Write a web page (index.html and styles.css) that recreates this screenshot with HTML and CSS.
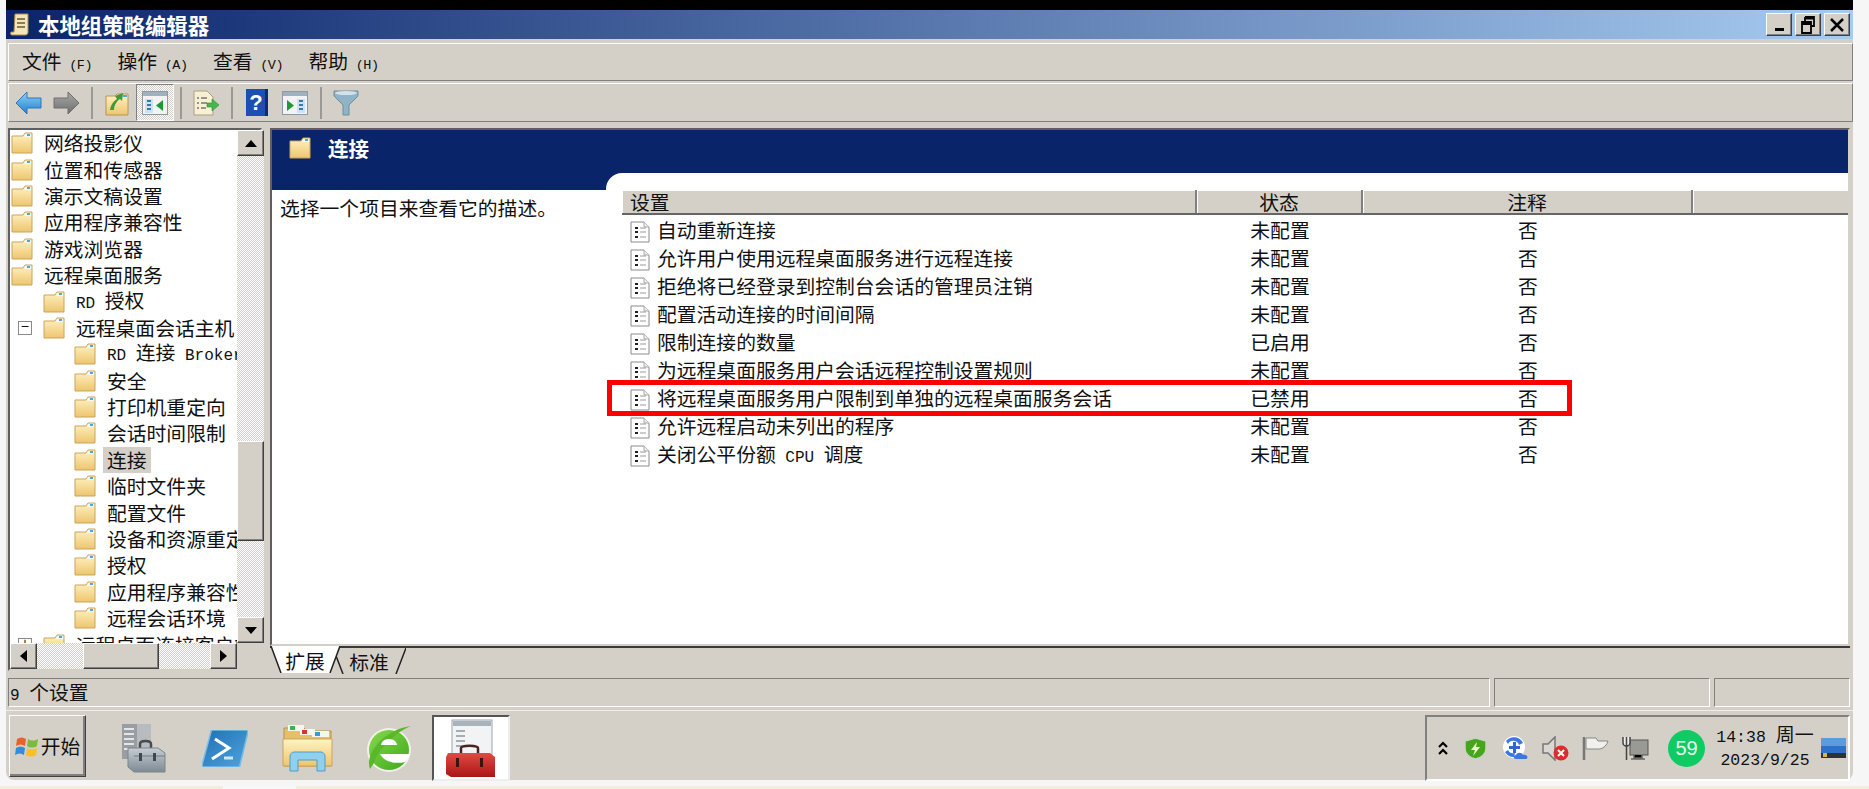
FILE: index.html
```html
<!DOCTYPE html>
<html lang="zh-CN">
<head>
  <meta charset="UTF-8" />
  <title>本地组策略编辑器</title>
  <link rel="stylesheet" href="styles.css">
</head>
<body>
  <!-- shared icons -->
  <svg class="defs" aria-hidden="true">
    <defs>
      <linearGradient id="gFolder" x1="0" y1="0" x2="0" y2="1"><stop offset="0" stop-color="#fff3c4"/><stop offset="1" stop-color="#eec56f"/></linearGradient>
      <linearGradient id="gBlue" x1="0" y1="0" x2="0" y2="1"><stop offset="0" stop-color="#8fd0f5"/><stop offset="1" stop-color="#1f7fd0"/></linearGradient>
      <linearGradient id="gGray" x1="0" y1="0" x2="0" y2="1"><stop offset="0" stop-color="#a8a8a8"/><stop offset="1" stop-color="#6e6e6e"/></linearGradient>
      <linearGradient id="gPs" x1="0" y1="0" x2="1" y2="1"><stop offset="0" stop-color="#1f6fb5"/><stop offset="1" stop-color="#4fa5dc"/></linearGradient>
      <linearGradient id="gRed" x1="0" y1="0" x2="0" y2="1"><stop offset="0" stop-color="#e24a44"/><stop offset="1" stop-color="#a91616"/></linearGradient>
      <linearGradient id="gSteel" x1="0" y1="0" x2="0" y2="1"><stop offset="0" stop-color="#c6cdd3"/><stop offset="1" stop-color="#7f8a93"/></linearGradient>
      <linearGradient id="gIe" x1="0" y1="0" x2="1" y2="1"><stop offset="0" stop-color="#86d94a"/><stop offset="1" stop-color="#3fa81e"/></linearGradient>
      <symbol id="folder" viewBox="0 0 22 22">
        <path d="M1 4h11l2-3h7v20H1z" fill="url(#gFolder)" stroke="#c9a55c" stroke-width="1"/>
        <path d="M14 2h6v3h-7z" fill="#f7f7f0"/>
        <rect x="16" y="2" width="3" height="2" fill="#4ea6e0"/>
      </symbol>
      <symbol id="doc" viewBox="0 0 20 22">
        <path d="M1 1h13l5 5v15H1z" fill="#fff" stroke="#8a8a8a"/>
        <path d="M14 1v5h5" fill="#eee" stroke="#aaa"/>
        <path d="M5 6h3v2H5zM5 10h3v2H5zM5 15h3v2H5z" fill="#222"/>
        <path d="M10 7h6M10 11h6M10 16h6" stroke="#999"/>
      </symbol>
    </defs>
  </svg>

  <div class="window">
    <div class="titlebar">
      <svg class="title-icon" viewBox="0 0 20 24">
        <path d="M5 1h13v18c0 2-1 3-3 3H2c-1 0-2-1-1-3h3z" fill="#f3e6b8" stroke="#a98f52"/>
        <path d="M7 6h8M7 10h8M7 14h8" stroke="#6b5a33" stroke-width="1.5"/>
      </svg>
      <span class="title-text">本地组策略编辑器</span>
      <div class="win-btns">
        <button class="win-btn"><span class="min-mark"></span></button>
        <button class="win-btn">
          <svg viewBox="0 0 16 18" width="16" height="18"><path d="M5 1h9v9h-3M5 1v4M5 2.500h9M2 6h9v11H2zM2 8h9" fill="none" stroke="#000" stroke-width="1.800"/></svg>
        </button>
        <button class="win-btn">
          <svg viewBox="0 0 16 16" width="16" height="16"><path d="M2 2l12 12M14 2L2 14" stroke="#000" stroke-width="2.500"/></svg>
        </button>
      </div>
    </div>

    <div class="menubar">
      <span class="menu-item">文件<small> (F)</small></span>
      <span class="menu-item">操作<small> (A)</small></span>
      <span class="menu-item">查看<small> (V)</small></span>
      <span class="menu-item">帮助<small> (H)</small></span>
    </div>

    <div class="toolbar">
      <span class="tb-btn"><svg width="27" height="24" viewBox="0 0 27 24"><path d="M1 12 12 1v6h14v10H12v6z" fill="url(#gBlue)" stroke="#2a78b8" stroke-linejoin="round"/></svg></span>
      <span class="tb-btn"><svg width="27" height="24" viewBox="0 0 27 24"><path d="M26 12 15 1v6H1v10h14v6z" fill="url(#gGray)" stroke="#6e6e6e" stroke-linejoin="round"/></svg></span>
      <span class="tb-sep"></span>
      <span class="tb-btn"><svg width="24" height="26" viewBox="0 0 24 26"><path d="M1 6h9l2-2h11v21H1z" fill="url(#gFolder)" stroke="#b9964f"/><path d="M5 20c1-6 4-9 7-11l-2-3 8-3-1 8-2-2c-3 2-6 6-6 11z" fill="#3f9a3a"/><rect x="18" y="5" width="4" height="2" fill="#4ea6e0"/></svg></span>
      <span class="tb-btn tb-on"><svg width="26" height="24" viewBox="0 0 26 24"><rect x=".5" y=".5" width="25" height="23" fill="#f3f3f3" stroke="#8c9aa6"/><rect x="1" y="1" width="24" height="4" fill="#9fb0bf"/><rect x="3" y="8" width="8" height="14" fill="#cfe0ee"/><path d="M5 10h4M5 14h4M5 18h4" stroke="#3a78a8" stroke-width="2"/><path d="M21 9v11l-7-5.500z" fill="#1d9a36"/></svg></span>
      <span class="tb-sep"></span>
      <span class="tb-btn"><svg width="27" height="26" viewBox="0 0 27 26"><path d="M1 1h13l6 6v18H1z" fill="#f7f0d2" stroke="#a9a080"/><path d="M4 8h2M8 8h6M4 13h2M8 13h6M4 18h2M8 18h5" stroke="#777" stroke-width="1.500"/><path d="M14 13h5V9l7 6-7 6v-4h-5z" fill="#45b84c" stroke="#2f8c36" stroke-width=".6"/></svg></span>
      <span class="tb-sep"></span>
      <span class="tb-btn"><svg width="22" height="27" viewBox="0 0 22 27"><rect width="22" height="27" fill="#1c4fb0"/><rect x="19" width="3" height="27" fill="#0c2c74"/><text x="10" y="21" class="help-mark">?</text></svg></span>
      <span class="tb-btn"><svg width="26" height="24" viewBox="0 0 26 24"><rect x=".5" y=".5" width="25" height="23" fill="#f3f3f3" stroke="#8c9aa6"/><rect x="1" y="1" width="24" height="4" fill="#9fb0bf"/><rect x="15" y="8" width="8" height="14" fill="#cfe0ee"/><path d="M17 10h4M17 14h4M17 18h4" stroke="#3a78a8" stroke-width="2"/><path d="M5 9v11l7-5.500z" fill="#1d9a36"/></svg></span>
      <span class="tb-sep"></span>
      <span class="tb-btn"><svg width="26" height="27" viewBox="0 0 26 27"><path d="M1 2h24v5l-9 9v10h-6V16L1 7z" fill="#8fb4c8" stroke="#6f8ea0"/><ellipse cx="13" cy="4" rx="11" ry="2" fill="#d3e2ea"/></svg></span>
    </div>

    <div class="main">
      <div class="tree-pane">
        <div class="tree">
          <div class="row lv0"><svg class="folder"><use href="#folder"/></svg><span>网络投影仪</span></div>
          <div class="row lv0"><svg class="folder"><use href="#folder"/></svg><span>位置和传感器</span></div>
          <div class="row lv0"><svg class="folder"><use href="#folder"/></svg><span>演示文稿设置</span></div>
          <div class="row lv0"><svg class="folder"><use href="#folder"/></svg><span>应用程序兼容性</span></div>
          <div class="row lv0"><svg class="folder"><use href="#folder"/></svg><span>游戏浏览器</span></div>
          <div class="row lv0"><svg class="folder"><use href="#folder"/></svg><span>远程桌面服务</span></div>
          <div class="row lv1"><svg class="folder"><use href="#folder"/></svg><span><i class="lat">RD </i>授权</span></div>
          <div class="row lv1"><b class="exp">−</b><svg class="folder"><use href="#folder"/></svg><span>远程桌面会话主机</span></div>
          <div class="row lv2"><svg class="folder"><use href="#folder"/></svg><span><i class="lat">RD </i>连接<i class="lat"> Broker</i></span></div>
          <div class="row lv2"><svg class="folder"><use href="#folder"/></svg><span>安全</span></div>
          <div class="row lv2"><svg class="folder"><use href="#folder"/></svg><span>打印机重定向</span></div>
          <div class="row lv2"><svg class="folder"><use href="#folder"/></svg><span>会话时间限制</span></div>
          <div class="row lv2"><svg class="folder"><use href="#folder"/></svg><span class="sel">连接</span></div>
          <div class="row lv2"><svg class="folder"><use href="#folder"/></svg><span>临时文件夹</span></div>
          <div class="row lv2"><svg class="folder"><use href="#folder"/></svg><span>配置文件</span></div>
          <div class="row lv2"><svg class="folder"><use href="#folder"/></svg><span>设备和资源重定向</span></div>
          <div class="row lv2"><svg class="folder"><use href="#folder"/></svg><span>授权</span></div>
          <div class="row lv2"><svg class="folder"><use href="#folder"/></svg><span>应用程序兼容性</span></div>
          <div class="row lv2"><svg class="folder"><use href="#folder"/></svg><span>远程会话环境</span></div>
          <div class="row lv1"><b class="exp">+</b><svg class="folder"><use href="#folder"/></svg><span>远程桌面连接客户端</span></div>
        </div>
        <div class="vscroll">
          <span class="sb-btn"><i class="tri up"></i></span>
          <span class="sb-thumb-v"></span>
          <span class="sb-btn"><i class="tri down"></i></span>
        </div>
        <div class="hscroll">
          <span class="sb-btn"><i class="tri left"></i></span>
          <span class="sb-thumb-h"></span>
          <span class="sb-btn"><i class="tri right"></i></span>
        </div>
        <div class="corner"></div>
      </div>

      <div class="right-pane">
        <div class="detail">
          <div class="detail-head">
            <svg class="folder"><use href="#folder"/></svg>
            <span>连接</span>
          </div>
          <div class="detail-body">
            <div class="desc">选择一个项目来查看它的描述。</div>
            <div class="settings">
              <div class="list-head">
                <span class="col-name">设置</span>
                <span>状态</span>
                <span>注释</span>
                <span></span>
              </div>
              <div class="list-row"><span class="col-name"><svg class="doc"><use href="#doc"/></svg>自动重新连接</span><span>未配置</span><span>否</span></div>
              <div class="list-row"><span class="col-name"><svg class="doc"><use href="#doc"/></svg>允许用户使用远程桌面服务进行远程连接</span><span>未配置</span><span>否</span></div>
              <div class="list-row"><span class="col-name"><svg class="doc"><use href="#doc"/></svg>拒绝将已经登录到控制台会话的管理员注销</span><span>未配置</span><span>否</span></div>
              <div class="list-row"><span class="col-name"><svg class="doc"><use href="#doc"/></svg>配置活动连接的时间间隔</span><span>未配置</span><span>否</span></div>
              <div class="list-row"><span class="col-name"><svg class="doc"><use href="#doc"/></svg>限制连接的数量</span><span>已启用</span><span>否</span></div>
              <div class="list-row"><span class="col-name"><svg class="doc"><use href="#doc"/></svg>为远程桌面服务用户会话远程控制设置规则</span><span>未配置</span><span>否</span></div>
              <div class="list-row"><span class="col-name"><svg class="doc"><use href="#doc"/></svg>将远程桌面服务用户限制到单独的远程桌面服务会话</span><span>已禁用</span><span>否</span></div>
              <div class="list-row"><span class="col-name"><svg class="doc"><use href="#doc"/></svg>允许远程启动未列出的程序</span><span>未配置</span><span>否</span></div>
              <div class="list-row"><span class="col-name"><svg class="doc"><use href="#doc"/></svg>关闭公平份额<i class="lat"> CPU </i>调度</span><span>未配置</span><span>否</span></div>
              <div class="red-box"></div>
            </div>
          </div>
        </div>
        <div class="tabs">
          <span class="tab tab-on">
            <svg class="tab-shape" viewBox="0 0 70 27" preserveAspectRatio="none"><path d="M1 0l10 27h49l10-27z" fill="#fff"/><path d="M1 0l10 27M60 27l10-27" fill="none" stroke="#222" stroke-width="1.500"/></svg>
            <span class="tab-label">扩展</span>
          </span>
          <span class="tab">
            <svg class="tab-shape" viewBox="0 0 74 27" preserveAspectRatio="none"><path d="M1 0l10 27M64 27l10-27" fill="none" stroke="#222" stroke-width="1.500"/></svg>
            <span class="tab-label">标准</span>
          </span>
        </div>
      </div>
    </div>

    <div class="statusbar">
      <span class="status-cell status-main"><i class="lat">9 </i>个设置</span>
      <span class="status-cell status-mid"></span>
      <span class="status-cell status-end"></span>
    </div>

    <div class="taskbar">
      <button class="start">
        <svg width="24" height="24" viewBox="0 0 24 24">
          <path d="M2 5c3-2 6-2 9 0l-1 7c-3-2-6-2-9 0z" fill="#e8622a"/>
          <path d="M13 5c3 2 6 2 10 0l-1 7c-3 2-7 2-10 0z" fill="#7cbb3c"/>
          <path d="M1 14c3-2 6-2 9 0l-1 7c-3-2-6-2-9 0z" fill="#2f8fdc"/>
          <path d="M12 14c3 2 6 2 10 0l-1 7c-3 2-7 2-10 0z" fill="#f6bf2b"/>
        </svg>
        <span>开始</span>
      </button>

      <span class="task">
        <svg width="46" height="50" viewBox="0 0 46 50">
          <path d="M2 1h15v35H2z" fill="#9a9ea3"/>
          <path d="M17 1h14v30H17z" fill="#b9bcbf"/>
          <path d="M4 6h10M4 11h10M4 16h10M4 21h10M4 26h10" stroke="#e3e5e7" stroke-width="2"/>
          <path d="M20 25v-4c0-4 11-4 11 0v4" fill="none" stroke="#454c52" stroke-width="2.500"/>
          <path d="M8 25h30l7 5v19H14l-6-5z" fill="url(#gSteel)" stroke="#7a858d"/>
          <path d="M14 33h31" stroke="#6f7a82"/>
          <rect x="19" y="30" width="3" height="8" fill="#3f464c"/><rect x="33" y="30" width="3" height="8" fill="#3f464c"/>
        </svg>
      </span>
      <span class="task">
        <svg width="46" height="37" viewBox="0 0 46 37">
          <path d="M9 2c0-1 1-2 2-2h33c1 0 2 1 2 2l-8 33c0 1-1 2-2 2H2c-1 0-2-1-2-2z" fill="url(#gPs)" stroke="#79bce8" stroke-width="1.500"/>
          <path d="M13 9l14 9-17 11" fill="none" stroke="#fff" stroke-width="3"/>
          <path d="M22 28h9" stroke="#cfe6f6" stroke-width="3"/>
        </svg>
      </span>
      <span class="task">
        <svg width="51" height="48" viewBox="0 0 51 48">
          <path d="M2 4h20l3 3h24v35H2z" fill="#e5c068" stroke="#b6914a"/>
          <path d="M6 1h16v6H6zM18 5h15v6H18zM30 7h17v6H30z" fill="#f6f6ee"/>
          <rect x="8" y="2" width="5" height="4" fill="#3bb54a"/><rect x="20" y="6" width="5" height="4" fill="#d6362f"/><rect x="33" y="8" width="5" height="4" fill="#2f9be0"/>
          <path d="M1 15h49v27H1z" fill="url(#gFolder)" stroke="#c9a55c"/>
          <path d="M8 47V32c0-2 2-4 4-4h27c2 0 4 2 4 4v15h-8V36H16v11z" fill="#8fd0ee" stroke="#4d9cc9"/>
        </svg>
      </span>
      <span class="task">
        <svg width="46" height="50" viewBox="0 0 46 50">
          <circle cx="23" cy="27" r="22" fill="#f0f2ea"/>
          <circle cx="23" cy="27" r="20" fill="url(#gIe)"/>
          <path d="M4 46C-2 30 20 6 45 3 36 6 14 22 8 40z" fill="#59b82a"/>
          <path d="M15 22c1-8 15-8 16 0z" fill="#fff"/>
          <path d="M14 31h30c-1 3-3 6-5 8-8 2-20 1-25-8z" fill="#fff"/>
        </svg>
      </span>
      <span class="task task-on">
        <svg width="52" height="62" viewBox="0 0 52 62">
          <rect x="7" y="3" width="40" height="42" fill="#f2f3f5" stroke="#9ca4ab"/>
          <rect x="8" y="4" width="38" height="5" fill="#a9b3bb"/>
          <path d="M11 14h9M11 19h9M11 24h9M11 29h9" stroke="#8d959b" stroke-width="1.500"/>
          <path d="M16 36v-5c0-3 17-3 17 0v5" fill="none" stroke="#4a2222" stroke-width="2.500"/>
          <path d="M3 36h42l5 4v20H6l-5-3V40z" fill="url(#gRed)"/>
          <rect x="11" y="41" width="3" height="9" fill="#3a1414"/><rect x="35" y="41" width="3" height="9" fill="#3a1414"/>
        </svg>
      </span>

      <div class="tray">
        <svg class="chev" width="10" height="14" viewBox="0 0 10 14"><path d="M1 6l4-4 4 4M1 13l4-4 4 4" fill="none" stroke="#000" stroke-width="2.200"/></svg>
        <span class="tray-icon">
          <svg width="23" height="23" viewBox="0 0 23 23"><path d="M11.500 1 22 4v8c0 5-5 9-10.500 10C6 21 1 17 1 12V4z" fill="#45a51f" stroke="#c9d3c2" stroke-width="1.500"/><path d="M13 5l-6 8h4l-2 6 7-9h-4z" fill="#f2f7c0"/></svg>
        </span>
        <span class="tray-icon">
          <svg width="27" height="24" viewBox="0 0 27 24"><circle cx="12" cy="11" r="11" fill="#fff"/><path d="M4 5a10 10 0 0 1 17 2l-4 2a6 6 0 0 0-11-1zM3 16a10 10 0 0 0 9 5l1-4a6 6 0 0 1-7-3z" fill="#3b78e0"/><path d="M11 6h3v4h4v3h-4v4h-3v-4H7v-3h4z" fill="#2f66cf"/><path d="M14 23c-3 0-3-4 0-4 1-3 6-3 7 0 4-1 6 3 3 4z" fill="#3b78e0"/></svg>
        </span>
        <span class="tray-icon">
          <svg width="27" height="25" viewBox="0 0 27 25"><path d="M1 8h5l7-7v23l-7-7H1z" fill="#d9d7d2" stroke="#777" stroke-width="1.500"/><circle cx="19" cy="17" r="7.500" fill="#dd2c2c"/><path d="M16 14l6 6M22 14l-6 6" stroke="#fff" stroke-width="2"/></svg>
        </span>
        <span class="tray-icon">
          <svg width="27" height="25" viewBox="0 0 27 25"><path d="M2 1v23" stroke="#777" stroke-width="2.500"/><path d="M4 2h10l2 3h10c-1 4-4 7-8 8H4z" fill="#f1f0ec" stroke="#888"/></svg>
        </span>
        <span class="tray-icon">
          <svg width="27" height="25" viewBox="0 0 27 25"><rect x="8" y="4" width="18" height="15" fill="#9a9a94" stroke="#555"/><path d="M12 19v3h8v-3M9 23h14" stroke="#666" stroke-width="1.500"/><path d="M1 1v6c0 2 2 3 3 3h1c1 0 3-1 3-3V1M4.500 1v23" fill="#eee" stroke="#444" stroke-width="1.500"/></svg>
        </span>
        <span class="badge">59</span>
        <div class="clock">
          <div><i class="lat">14:38 </i>周一</div>
          <div><i class="lat">2023/9/25</i></div>
        </div>
        <svg width="25" height="20" viewBox="0 0 25 20"><rect width="25" height="20" fill="#2f70c8"/><rect width="25" height="8" fill="#5d9bdf"/><rect y="15" width="25" height="5" fill="#2d3138"/><rect x="2" y="15" width="4" height="4" fill="#d9b64a"/></svg>
      </div>
    </div>
  </div>
  <div class="bottom-strip">
    <span class="strip-a"></span>
    <span class="strip-b"></span>
  </div>
</body>
</html>
```
FILE: styles.css
```css
* {
  margin: 0;
  padding: 0;
  box-sizing: border-box;
}

body {
  width: 1869px;
  height: 789px;
  overflow: hidden;
  background: #f6f6f6;
  color: #111;
  font-family: "Noto Sans CJK SC", "Liberation Sans", sans-serif;
  font-size: 19.8px;
  line-height: 26px;
}

i, small {
  font-style: normal;
}

.lat {
  font-family: "Liberation Mono", monospace;
  font-size: 16px;
  white-space: pre;
}

.defs {
  position: absolute;
  width: 0;
  height: 0;
}

.window {
  width: 1847px;
  height: 780px;
  margin-left: 6px;
  border-top: 10px solid #000;
  background: #d4d0c8;
  border-radius: 0 0 8px 8px;
  display: flex;
  flex-direction: column;
}

/* title bar */
.titlebar {
  height: 29px;
  flex: none;
  display: flex;
  align-items: center;
  padding: 0 3px 0 4px;
  background: linear-gradient(to right, #0a246a, #a6caf0);
}

.title-icon {
  width: 20px;
  height: 24px;
}

.title-text {
  margin-left: 8px;
  color: #fff;
  font-size: 21.4px;
  font-weight: 700;
}

.win-btns {
  margin-left: auto;
  display: flex;
  gap: 3px;
}

.win-btn {
  width: 26px;
  height: 23px;
  display: flex;
  align-items: center;
  justify-content: center;
  background: #d4d0c8;
  border: 1px solid;
  border-color: #fff #404040 #404040 #fff;
  box-shadow: inset -1px -1px #808080;
}

.min-mark {
  width: 9px;
  height: 3px;
  margin-top: 10px;
  background: #000;
}

/* menu and tool bars */
.menubar {
  height: 38px;
  flex: none;
  margin: 4px 0 0 2px;
  padding: 3px 0 0 13px;
  display: flex;
  align-items: center;
  gap: 26.5px;
  border: 1px solid;
  border-color: #fff #808080 #808080 #fff;
}

.menu-item {
  width: 69px;
  white-space: nowrap;
}

.menu-item small {
  font-family: "Liberation Mono", monospace;
  font-size: 13.5px;
  letter-spacing: -0.5px;
}

.toolbar {
  height: 39px;
  flex: none;
  margin: 2px 0 0 2px;
  display: flex;
  align-items: center;
  border: 1px solid;
  border-color: #fff #808080 #808080 #fff;
}

.tb-btn {
  width: 38px;
  height: 37px;
  flex: none;
  display: flex;
  align-items: center;
  justify-content: center;
}

.tb-on {
  background: repeating-conic-gradient(#fff 0 25%, #d4d0c8 0 50%) 0 0 / 2px 2px;
  border: 1px solid;
  border-color: #808080 #fff #fff #808080;
}

.tb-sep {
  width: 13px;
  height: 32px;
  flex: none;
  background: linear-gradient(#9a9a94, #9a9a94) center / 2px 100% no-repeat;
}

.help-mark {
  fill: #fff;
  font-family: "Liberation Sans", sans-serif;
  font-size: 22px;
  font-weight: 700;
  text-anchor: middle;
}

/* main area */
.main {
  height: 545px;
  flex: none;
  margin: 6px 3px 0 2px;
  display: flex;
  gap: 8px;
}

.tree-pane {
  width: 254px;
  height: 543px;
  display: grid;
  grid-template-columns: 1fr 27px;
  grid-template-rows: 1fr 26px;
  border: 2px solid;
  border-color: #5f5f5f #d4d0c8 #d4d0c8 #5f5f5f;
  background: #fff;
}

.tree {
  overflow: hidden;
}

.row {
  height: 26.4px;
  display: flex;
  align-items: center;
  white-space: nowrap;
}

.lv0 { padding-left: 1px; }
.lv1 { padding-left: 33px; }
.lv2 { padding-left: 64px; }

.folder {
  width: 22px;
  height: 22px;
  flex: none;
  margin-right: 11px;
}

.sel {
  background: #d4d0c8;
  padding: 0 4px;
  margin-left: -4px;
}

.exp {
  width: 14px;
  height: 14px;
  flex: none;
  margin-left: -25px;
  margin-right: 11px;
  border: 1px solid #8a8a8a;
  font: 400 14px/11px "Liberation Mono", monospace;
  text-align: center;
}

.vscroll,
.hscroll {
  display: flex;
  background: repeating-conic-gradient(#fff 0 25%, #d4d0c8 0 50%) 0 0 / 2px 2px;
}

.vscroll {
  flex-direction: column;
}

.sb-btn,
.sb-thumb-v,
.sb-thumb-h {
  flex: none;
  display: flex;
  align-items: center;
  justify-content: center;
  background: #d4d0c8;
  border: 1px solid;
  border-color: #fff #404040 #404040 #fff;
  box-shadow: inset -1px -1px #808080;
}

.sb-btn {
  width: 27px;
  height: 26px;
}

.sb-thumb-v {
  height: 100px;
  margin: 285px 0 76px;
}

.sb-thumb-h {
  width: 76px;
  margin: 0 51px 0 46px;
}

.corner {
  background: #d4d0c8;
}

.tri {
  width: 0;
  height: 0;
  border: 6px solid transparent;
}

.tri.up { border-bottom: 7px solid #000; border-top: 0; }
.tri.down { border-top: 7px solid #000; border-bottom: 0; }
.tri.left { border-right: 7px solid #000; border-left: 0; }
.tri.right { border-left: 7px solid #000; border-right: 0; }

.right-pane {
  width: 1580px;
  display: flex;
  flex-direction: column;
}

.detail {
  height: 518px;
  flex: none;
  background: #fff;
  border: 2px solid;
  border-color: #5f5f5f #d4d0c8 #d4d0c8 #5f5f5f;
  display: flex;
  flex-direction: column;
  overflow: hidden;
}

.detail-head {
  height: 60px;
  flex: none;
  padding: 0 0 24px 17px;
  display: flex;
  align-items: center;
  background: #0a246a;
  color: #fff;
  font-weight: 700;
  font-size: 20.5px;
}

.detail-head .folder {
  margin-right: 17px;
}

.detail-body {
  flex: 1;
  margin-top: -17px;
  display: flex;
}

.desc {
  width: 334px;
  flex: none;
  padding: 22px 0 0 8px;
}

.settings {
  flex: 1;
  position: relative;
  padding: 17px 0 0 16px;
  background: #fff;
  border-top-left-radius: 16px;
}

.list-head,
.list-row {
  display: grid;
  grid-template-columns: 575px 166px 330px 1fr;
  text-align: center;
}

.list-head {
  height: 25px;
  background: #d4d0c8;
  border-bottom: 2px solid #666;
  line-height: 23px;
}

.list-head > span {
  border-right: 2px solid #808080;
  box-shadow: inset 1px 1px #fff;
}

.list-head > span:last-child {
  border-right: 0;
}

.list-row {
  height: 28px;
  line-height: 29px;
}

.col-name {
  padding-left: 8px;
  text-align: left;
  white-space: nowrap;
}

.doc {
  width: 20px;
  height: 22px;
  margin-right: 7px;
  vertical-align: -5px;
}

.red-box {
  position: absolute;
  left: 1px;
  top: 207px;
  width: 965px;
  height: 36px;
  border: 5px solid #f00;
}

/* tabs under the details pane */
.tabs {
  height: 27px;
  flex: none;
  display: flex;
  border-top: 2px solid #3a3a3a;
}

.tab {
  position: relative;
  height: 26px;
  padding-top: 1px;
  display: flex;
  align-items: center;
  justify-content: center;
}

.tab-on {
  width: 70px;
  height: 27px;
  z-index: 1;
  margin-top: -2px;
  padding-top: 3px;
}

.tab:not(.tab-on) {
  width: 74px;
  margin-left: -8px;
}

.tab-shape {
  position: absolute;
  inset: 0;
  width: 100%;
  height: 100%;
}

.tab-label {
  position: relative;
}

/* status bar */
.statusbar {
  height: 29px;
  flex: none;
  margin: 5px 3px 0 2px;
  display: flex;
  gap: 4px;
}

.status-cell {
  height: 29px;
  border: 1px solid;
  border-color: #808080 #fff #fff #808080;
  padding-left: 1px;
}

.status-main { flex: 1; }
.status-mid { width: 216px; }
.status-end { width: 136px; }

/* task bar */
.taskbar {
  flex: 1;
  margin-top: 3px;
  padding: 4px 3px;
  display: flex;
  border-top: 1px solid #eee;
}

.start {
  width: 77px;
  height: 62px;
  flex: none;
  display: flex;
  align-items: center;
  justify-content: center;
  gap: 2px;
  background: #d4d0c8;
  color: #111;
  font: inherit;
  border: 1px solid;
  border-color: #fff #404040 #404040 #fff;
  box-shadow: inset -2px -2px #808080;
}

.task {
  width: 82px;
  flex: none;
  display: flex;
  align-items: center;
  justify-content: center;
}

.task:first-of-type {
  margin-left: 16px;
}

.task-on {
  width: 78px;
  margin-left: 2px;
  background: #fff;
  border: 2px solid;
  border-color: #555 #eee #eee #555;
}

.tray {
  width: 425px;
  margin-left: auto;
  padding: 0 2px 0 11px;
  display: flex;
  align-items: center;
  border: 2px solid;
  border-color: #808080 #fff #fff #808080;
}

.chev {
  margin-right: 7px;
}

.tray-icon {
  width: 40px;
  flex: none;
  display: flex;
  justify-content: center;
}

.badge {
  width: 37px;
  height: 37px;
  flex: none;
  margin-left: 13px;
  border-radius: 50%;
  background: #0fcb63;
  color: #e8ffe8;
  font: 400 20px/37px "Liberation Sans", sans-serif;
  text-align: center;
}

.clock {
  width: 112px;
  flex: none;
  margin: -3px 0 0 4px;
  text-align: center;
  font-size: 19px;
  line-height: 19px;
}

.clock .lat {
  font-size: 16.5px;
}

.bottom-strip {
  display: flex;
  height: 3px;
  margin-top: 6px;
  background: #f5eddc;
}

.strip-a {
  width: 223px;
}

.strip-b {
  width: 73px;
  background: #f8f8f6;
}
```
